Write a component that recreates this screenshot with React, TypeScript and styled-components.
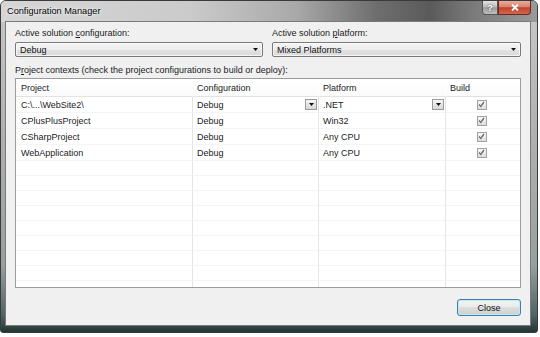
import React from 'react';
import styled, { createGlobalStyle } from 'styled-components';

const GlobalStyle = createGlobalStyle`
  html, body { margin: 0; padding: 0; background: #ffffff; }
  body { font-family: "Liberation Sans", Arial, sans-serif; }
`;

const Window = styled.div`
  width: 538px;
  height: 333px;
  box-sizing: border-box;
  display: flex;
  flex-direction: column;
  border: 1px solid #3a3a3a;
  border-radius: 6px 6px 3px 3px;
  overflow: hidden;
  background: linear-gradient(
    to bottom,
    #c9c9c9 0%,
    #b3b3b3 35%,
    #979f9f 80%,
    #4d6464 95%,
    #233535 100%
  );
`;

const TitleBar = styled.div`
  height: 21px;
  flex: none;
  display: flex;
  align-items: flex-start;
  padding-left: 6px;
  background: linear-gradient(
    to right,
    #d6d6d6 0%,
    #cbcbcb 35%,
    #a9a9a9 55%,
    #6e6e6e 70%,
    #5a5a5a 80%,
    #7a7a7a 88%,
    #9a9a9a 100%
  );
`;

const Title = styled.div`
  font-size: 9.2px;
  line-height: 20px;
  color: #000;
  text-shadow: 0 0 5px rgba(255, 255, 255, 0.95), 0 0 2px rgba(255, 255, 255, 0.9);
`;

const CaptionButtons = styled.div`
  margin-left: auto;
  margin-right: 6px;
  display: flex;
`;

const CaptionButton = styled.div<{ $variant: 'help' | 'close' }>`
  height: 14px;
  box-sizing: border-box;
  display: flex;
  align-items: center;
  justify-content: center;
  border: 1px solid ${p => (p.$variant === 'close' ? '#6b2a1e' : '#555')};
  border-top: none;
  width: ${p => (p.$variant === 'close' ? '33px' : '16px')};
  border-radius: ${p => (p.$variant === 'close' ? '0 0 4px 0' : '0 0 0 4px')};
  background: ${p =>
    p.$variant === 'close'
      ? 'linear-gradient(to bottom, #e9ad9d 0%, #d7826e 45%, #c0432b 52%, #d4674d 100%)'
      : 'linear-gradient(to bottom, #e3e3e3 0%, #bdbdbd 45%, #9c9c9c 52%, #bfbfbf 100%)'};
  color: #fff;
  font-size: 9px;
  font-weight: bold;
  text-shadow: 0 0 2px #333;
`;

const Client = styled.div`
  flex: 1;
  margin: 0 7px 7px 5px;
  background: #f0f0f0;
  box-shadow: 0 0 0 1px #7a7a7a;
  padding: 5px 9px 9px 9px;
  display: flex;
  flex-direction: column;
  font-size: 9px;
  color: #1a1a1a;
`;

const TopRow = styled.div`
  display: grid;
  grid-template-columns: 248px 249px;
  column-gap: 9px;
`;

const Field = styled.div`
  display: flex;
  flex-direction: column;
  gap: 3px;
`;

const Label = styled.div<{ $spaced?: boolean }>`
  line-height: 12px;
  white-space: nowrap;
  margin-top: ${p => (p.$spaced ? '7px' : '0')};
  margin-bottom: ${p => (p.$spaced ? '2px' : '0')};
`;

const Combo = styled.div`
  height: 15px;
  box-sizing: border-box;
  border: 1px solid #7a7a7a;
  border-radius: 2px;
  display: flex;
  align-items: center;
  padding: 0 4px 0 4px;
  color: #111;
  background: linear-gradient(to bottom, #f4f4f4 0%, #ededed 50%, #e2e2e2 51%, #dadada 100%);
  box-shadow: inset 0 0 0 1px rgba(255, 255, 255, 0.7);
`;

const ComboText = styled.span`
  flex: 1;
`;

const Arrow = () => (
  <svg width="5" height="3" viewBox="0 0 5 3">
    <path d="M0 0 H5 L2.5 3 Z" fill="#111" />
  </svg>
);

const ListGrid = styled.div`
  height: 210px;
  box-sizing: border-box;
  border: 1px solid #9c9c9c;
  background: #fff;
  display: grid;
  grid-template-columns: 176px 126px 127px 75px;
  grid-template-rows: 18px repeat(4, 16px) repeat(9, 15px);
  align-content: start;
  overflow: hidden;
`;

const HeaderCell = styled.div<{ $first?: boolean }>`
  box-sizing: border-box;
  display: flex;
  align-items: center;
  padding-left: ${p => (p.$first ? '5px' : '4px')};
  border-left: ${p => (p.$first ? 'none' : '1px solid #ffffff')};
  border-bottom: 1px solid #e2e2e2;
  background: linear-gradient(to bottom, #ffffff 0%, #fbfbfb 100%);
  color: #222;
`;

const Cell = styled.div<{ $first?: boolean; $center?: boolean }>`
  box-sizing: border-box;
  display: flex;
  align-items: center;
  justify-content: ${p => (p.$center ? 'center' : 'flex-start')};
  padding: ${p => (p.$center ? '0 3px 0 0' : p.$first ? '0 1px 0 5px' : '0 1px 0 4px')};
  border-left: ${p => (p.$first ? 'none' : '1px solid #e4e4e4')};
  border-bottom: 1px solid #f4f4f4;
  color: #222;
  white-space: nowrap;
`;

const CellText = styled.span`
  flex: 1;
`;

const DropButton = styled.div`
  width: 12px;
  height: 11px;
  box-sizing: border-box;
  border: 1px solid #9a9a9a;
  background: linear-gradient(to bottom, #f6f6f6 0%, #e6e6e6 50%, #d8d8d8 100%);
  display: flex;
  align-items: center;
  justify-content: center;
`;

const CheckBox = styled.div`
  width: 10px;
  height: 10px;
  box-sizing: border-box;
  border: 1px solid #a2a2a2;
  background: linear-gradient(to bottom, #f6f6f6 0%, #dedede 100%);
  display: flex;
  align-items: center;
  justify-content: center;
`;

const Check = () => (
  <svg width="7" height="7" viewBox="0 0 7 7">
    <path d="M1 3.5 L2.8 5.5 L6 1" fill="none" stroke="#6e6e6e" strokeWidth="1.3" />
  </svg>
);

const Footer = styled.div`
  margin-top: 11px;
  display: flex;
  justify-content: flex-end;
`;

const Button = styled.div`
  width: 64px;
  height: 17px;
  box-sizing: border-box;
  border: 1px solid #3c7fb1;
  border-radius: 3px;
  display: flex;
  align-items: center;
  justify-content: center;
  color: #111;
  background: linear-gradient(to bottom, #f2f2f2 0%, #ebebeb 49%, #dddddd 50%, #cfcfcf 100%);
  box-shadow: inset 0 0 0 1px #bfe9f8;
`;

type Row = { project: string; config: string; platform: string; selected?: boolean };

const rows: Row[] = [
  { project: 'C:\\...\\WebSite2\\', config: 'Debug', platform: '.NET', selected: true },
  { project: 'CPlusPlusProject', config: 'Debug', platform: 'Win32' },
  { project: 'CSharpProject', config: 'Debug', platform: 'Any CPU' },
  { project: 'WebApplication', config: 'Debug', platform: 'Any CPU' },
];

const EMPTY_ROWS = 9;

export default function App() {
  return (
    <>
      <GlobalStyle />
      <Window>
        <TitleBar>
          <Title>Configuration Manager</Title>
          <CaptionButtons>
            <CaptionButton $variant="help">?</CaptionButton>
            <CaptionButton $variant="close">
              <svg width="8" height="7" viewBox="0 0 8 7">
                <path d="M1 0.5 L7 6.5 M7 0.5 L1 6.5" stroke="#fff" strokeWidth="1.8" />
              </svg>
            </CaptionButton>
          </CaptionButtons>
        </TitleBar>
        <Client>
          <TopRow>
            <Field>
              <Label>
                Active solution <u>c</u>onfiguration:
              </Label>
              <Combo>
                <ComboText>Debug</ComboText>
                <Arrow />
              </Combo>
            </Field>
            <Field>
              <Label>
                Active solution <u>p</u>latform:
              </Label>
              <Combo>
                <ComboText>Mixed Platforms</ComboText>
                <Arrow />
              </Combo>
            </Field>
          </TopRow>
          <Label $spaced>
            P<u>r</u>oject contexts (check the project configurations to build or deploy):
          </Label>
          <ListGrid>
            <HeaderCell $first>Project</HeaderCell>
            <HeaderCell>Configuration</HeaderCell>
            <HeaderCell>Platform</HeaderCell>
            <HeaderCell>Build</HeaderCell>
            {rows.map(r => (
              <React.Fragment key={r.project}>
                <Cell $first>{r.project}</Cell>
                <Cell>
                  <CellText>{r.config}</CellText>
                  {r.selected && (
                    <DropButton>
                      <Arrow />
                    </DropButton>
                  )}
                </Cell>
                <Cell>
                  <CellText>{r.platform}</CellText>
                  {r.selected && (
                    <DropButton>
                      <Arrow />
                    </DropButton>
                  )}
                </Cell>
                <Cell $center>
                  <CheckBox>
                    <Check />
                  </CheckBox>
                </Cell>
              </React.Fragment>
            ))}
            {Array.from({ length: EMPTY_ROWS }).map((_, i) => (
              <React.Fragment key={`e${i}`}>
                <Cell $first />
                <Cell />
                <Cell />
                <Cell />
              </React.Fragment>
            ))}
          </ListGrid>
          <Footer>
            <Button>Close</Button>
          </Footer>
        </Client>
      </Window>
    </>
  );
}
